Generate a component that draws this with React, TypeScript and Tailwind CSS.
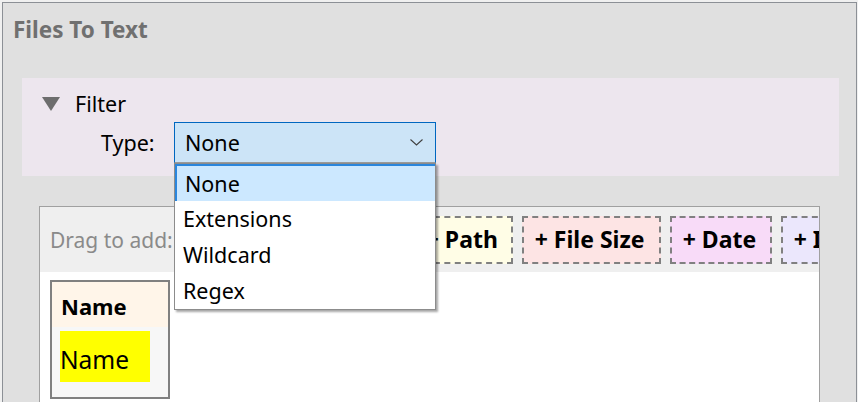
import React from "react"

const font = { fontFamily: '"Noto Sans", "Open Sans", sans-serif' }

// die ersten beiden liegen unter der aufgeklappten Auswahl
const chips = [
  { label: "", bg: "bg-[#fff5e9]", w: "w-[106px]" },
  { label: "", bg: "bg-[#e6f4e6]", w: "w-[107px]" },
  { label: "+ Path", bg: "bg-[#fffde6]", w: "w-[100px]" },
  { label: "+ File Size", bg: "bg-[#fde4e4]", w: "w-[139px]" },
  { label: "+ Date", bg: "bg-[#f8dbf8]", w: "w-[102px]" },
  { label: "+ Image Size", bg: "bg-[#ebe7fc]", w: "w-[150px]" },
]

const options = ["None", "Extensions", "Wildcard", "Regex"]

function Chevron() {
  return (
    <svg width="13" height="7" viewBox="0 0 13 7" className="text-[#404040]">
      <path d="M0.5 0.5 L6.5 6 L12.5 0.5" fill="none" stroke="currentColor" strokeWidth="1.1" />
    </svg>
  )
}

export default function App() {
  return (
    <div
      className="relative w-[858px] h-[402px] overflow-hidden bg-[#f0f0f0] pt-[2px] pl-[2px] pr-[1px]"
      style={font}
    >
      <div className="h-[420px] border-t border-l border-r border-[#8c9096] bg-[#e0e0e0]">
        {/* Titel */}
        <h1 className="pl-[10px] pt-[12px] text-[22.5px] leading-[30px] font-bold text-[#707070]">
          Files To Text
        </h1>

        {/* Filter */}
        <div className="mt-[33px] ml-[19px] mr-[17px] h-[98px] bg-[#ede6ee] pl-[20px] pt-[12px]">
          <div className="flex items-center h-[28px]">
            <svg width="18" height="14" viewBox="0 0 18 14">
              <polygon points="0,0 18,0 9,14" fill="#6d6d6d" />
            </svg>
            <span className="ml-[15px] text-[21.5px] leading-[28px] text-black">Filter</span>
          </div>
          <div className="flex items-center mt-[4px]">
            <span className="ml-[59px] w-[73px] text-[21.5px] leading-[28px] text-black">Type:</span>
            <div className="flex items-center justify-between w-[262px] h-[41px] bg-[#cce4f7] border border-[#0067c0] border-b-[#9a9a9a] pl-[10px] pr-[12px]">
              <span className="text-[21.5px] leading-[28px] text-black">None</span>
              <Chevron />
            </div>
          </div>
        </div>

        {/* Felder */}
        <div className="mt-[30px] ml-[36px] w-[781px] h-[220px] border border-[#a0a0a0] bg-white">
          <div className="flex items-center gap-[9px] h-[65px] bg-[#efefef] pl-[10px] overflow-hidden whitespace-nowrap">
            <span className="text-[21px] leading-[28px] text-[#8a8a8a]">Drag to add:</span>
            {chips.map((c, i) => (
              <div
                key={i}
                className={`${c.bg} ${c.w} shrink-0 h-[48px] flex items-center pl-[11px] border-2 border-dashed border-[#808080] text-[23px] font-bold text-black`}
              >
                {c.label}
              </div>
            ))}
          </div>
          <div className="pl-[10px] pt-[8px]">
            <div className="w-[120px] h-[119px] border-2 border-[#808080] bg-[#f7f7f7]">
              <div className="h-[45px] bg-[#fff5e9] flex items-center pl-[9px] pt-[4px] text-[22px] font-bold text-black">
                Name
              </div>
              <div className="pl-[8px] pt-[4px]">
                <div className="w-[90px] h-[51px] bg-[#ffff00] flex items-center pt-[8px] text-[24.5px] text-black">
                  Name
                </div>
              </div>
            </div>
          </div>
        </div>
      </div>

      {/* Aufgeklappte Auswahl */}
      <div className="absolute left-[174px] top-[163px] w-[262px] bg-white border border-[#8c8c8c] shadow-[2px_2px_2px_rgba(0,0,0,0.35)]">
        {options.map((o, i) => (
          <div
            key={o}
            className={`h-[36px] flex items-center pl-[8px] text-[21.5px] leading-[28px] text-black ${
              i === 0 ? "bg-[#cce8ff] border-t-2 border-l-2 border-[#2a86dd] h-[37px] pl-[6px]" : ""
            }`}
          >
            {o}
          </div>
        ))}
      </div>
    </div>
  )
}
